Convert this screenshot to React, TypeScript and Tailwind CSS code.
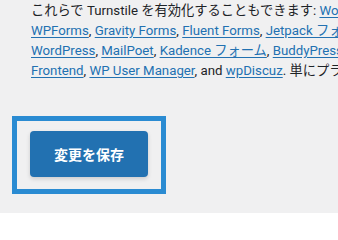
const A = ({ children }: { children: React.ReactNode }) => (
  <a href="#" className="text-[#2271b1] underline underline-offset-[2px]">
    {children}
  </a>
)

export default function App() {
  return (
    <div
      className="w-[338px] h-[213px] overflow-hidden bg-[#f0f0f1] text-[#1d2327]"
      style={{ fontFamily: 'Roboto, "Noto Sans CJK JP", sans-serif' }}
    >
      <div className="pl-[31px] pt-[1px] text-[13.25px] leading-[20px] whitespace-nowrap">
        <div>
          これらで Turnstile を有効化することもできます: <A>WooCommerce</A>,
        </div>
        <div>
          <A>WPForms</A>, <A>Gravity Forms</A>, <A>Fluent Forms</A>, <A>Jetpack フォーム</A>,
        </div>
        <div>
          <A>WordPress</A>, <A>MailPoet</A>, <A>Kadence フォーム</A>, <A>BuddyPress</A>,
        </div>
        <div>
          <A>Frontend</A>, <A>WP User Manager</A>, and <A>wpDiscuz</A>. 単にプラグインを
        </div>
      </div>
      <div className="ml-[12px] mt-[35px] w-[154px] h-[78px] border-[5px] border-[#2a8bd2] pl-[13px] pt-[10px]">
        <button
          className="w-[118px] h-[46px] rounded-[4px] bg-[#2271b1] text-white text-[14px] font-bold shadow-[0_2px_4px_rgba(0,0,0,0.15)]"
          style={{ fontFamily: '"Noto Sans CJK JP", sans-serif' }}
        >
          変更を保存
        </button>
      </div>
    </div>
  )
}
